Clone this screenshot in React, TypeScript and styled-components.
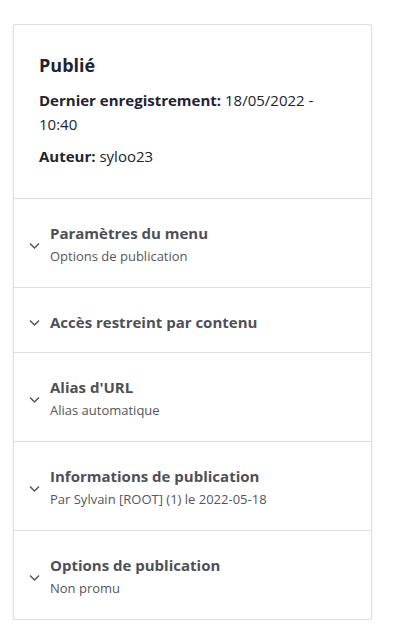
import React from "react";
import styled, { createGlobalStyle } from "styled-components";

const GlobalStyle = createGlobalStyle`
  body {
    margin: 0;
    background: #ffffff;
    font-family: "Open Sans", "Noto Sans", sans-serif;
    color: #222330;
  }
`;

const Page = styled.div`
  padding: 24px 0 0 13px;
`;

const Card = styled.aside`
  width: 359px;
  box-sizing: border-box;
  border: 1px solid #dedfe4;
  border-radius: 2px;
  box-shadow: 0 1px 3px rgba(0, 0, 0, 0.08);
  background: #ffffff;
`;

const Meta = styled.div`
  padding: 25px 25px 30px;
  border-bottom: 1px solid #dedfe4;
`;

const Status = styled.h3`
  margin: 0 0 8px;
  font-size: 18px;
  line-height: 30px;
  font-weight: 700;
`;

const MetaLine = styled.p`
  margin: 0 0 8px;
  font-size: 15px;
  line-height: 24px;
  &:last-child {
    margin-bottom: 0;
  }
  b {
    font-weight: 700;
  }
`;

const Item = styled.details`
  border-bottom: 1px solid #dedfe4;
  &:last-child {
    border-bottom: none;
  }
`;

const Summary = styled.summary`
  display: flex;
  align-items: center;
  gap: 9px;
  padding: 24px 14px 20px 14px;
  list-style: none;
  cursor: pointer;
  color: #4f5057;
  &::-webkit-details-marker {
    display: none;
  }
`;

const Chevron = styled.svg`
  flex: none;
  width: 13px;
  height: 13px;
`;

const Text = styled.div`
  display: flex;
  flex-direction: column;
`;

const Title = styled.span`
  font-size: 15px;
  line-height: 20px;
  font-weight: 700;
`;

const Sub = styled.span`
  margin-top: 2px;
  font-size: 13px;
  line-height: 22px;
  color: #55565b;
`;

const sections = [
  { title: "Paramètres du menu", sub: "Options de publication" },
  { title: "Accès restreint par contenu" },
  { title: "Alias d'URL", sub: "Alias automatique" },
  { title: "Informations de publication", sub: "Par Sylvain [ROOT] (1) le 2022-05-18" },
  { title: "Options de publication", sub: "Non promu" },
];

export default function App() {
  return (
    <Page>
      <GlobalStyle />
      <Card>
        <Meta>
          <Status>Publié</Status>
          <MetaLine>
            <b>Dernier enregistrement:</b> 18/05/2022 - 10:40
          </MetaLine>
          <MetaLine>
            <b>Auteur:</b> syloo23
          </MetaLine>
        </Meta>
        {sections.map((s) => (
          <Item key={s.title}>
            <Summary>
              <Chevron viewBox="0 0 13 13">
                <path d="M2 4.5l4.5 4.5 4.5-4.5" fill="none" stroke="#545560" strokeWidth="1.5" />
              </Chevron>
              <Text>
                <Title>{s.title}</Title>
                {s.sub && <Sub>{s.sub}</Sub>}
              </Text>
            </Summary>
          </Item>
        ))}
      </Card>
    </Page>
  );
}
